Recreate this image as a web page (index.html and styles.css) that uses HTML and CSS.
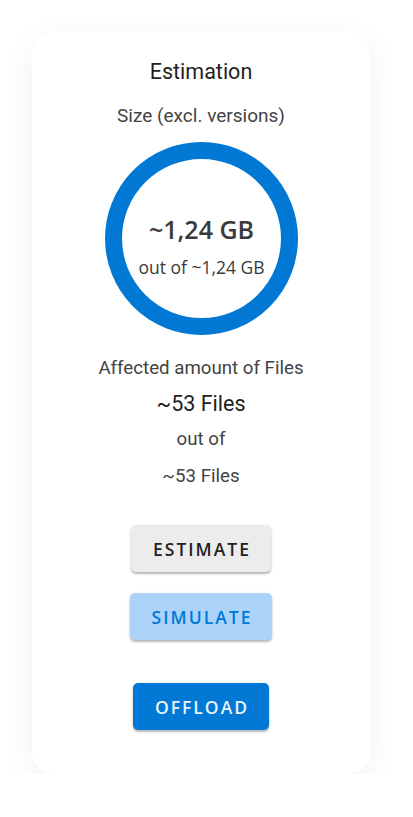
FILE: index.html
```html
<!DOCTYPE html>
<html>
<head>
<meta charset="utf-8">
<link rel="stylesheet" href="styles.css">
</head>
<body>
<div class="page">
  <div class="card">
    <h2 class="title">Estimation</h2>
    <div class="label size-label">Size (excl. versions)</div>
    <div class="ring">
      <svg class="ring-svg" width="193" height="193" viewBox="0 0 193 193">
        <circle cx="96.5" cy="96.5" r="88" fill="none" stroke="#0078d4" stroke-width="17"/>
      </svg>
      <div class="ring-text">
        <div class="ring-value">~1,24 GB</div>
        <div class="ring-sub">out of ~1,24 GB</div>
      </div>
    </div>
    <div class="label files-label">Affected amount of Files</div>
    <div class="files-value">~53 Files</div>
    <div class="label files-out">out of</div>
    <div class="label files-total">~53 Files</div>
    <div class="buttons">
      <button class="btn btn-estimate">ESTIMATE</button>
      <button class="btn btn-simulate">SIMULATE</button>
      <button class="btn btn-offload">OFFLOAD</button>
    </div>
  </div>
</div>
</body>
</html>
```

FILE: styles.css
```css
html, body {
  margin: 0;
  padding: 0;
  background: #ffffff;
}
body {
  font-family: Roboto, "Liberation Sans", sans-serif;
  color: #444;
}
.page {
  padding: 32px 43px 0 32px;
}
.card {
  width: 338px;
  height: 742px;
  box-sizing: border-box;
  background: #fff;
  border-radius: 22px;
  box-shadow: 0 8px 32px rgba(0, 0, 0, 0.06);
  display: flex;
  flex-direction: column;
  align-items: center;
  padding-top: 26px;
}
.title {
  margin: 0;
  font-size: 21.5px;
  font-weight: 400;
  color: #1f1f1f;
  line-height: 28px;
}
.label {
  font-size: 18.7px;
  line-height: 22px;
  color: #444;
}
.size-label {
  font-size: 19px;
  margin-top: 19px;
}
.ring {
  position: relative;
  width: 193px;
  height: 193px;
  margin-top: 15px;
  margin-left: 1px;
}
.ring-svg {
  display: block;
}
.ring-text {
  position: absolute;
  inset: 0;
  display: flex;
  flex-direction: column;
  align-items: center;
  justify-content: center;
  padding-top: 14px;
  box-sizing: border-box;
  font-family: "Open Sans", sans-serif;
  color: #3a3a3a;
}
.ring-value {
  font-size: 25px;
  font-weight: 600;
  line-height: 32px;
}
.ring-sub {
  font-size: 17.5px;
  line-height: 24px;
  margin-top: 10px;
}
.files-label {
  margin-top: 22px;
}
.files-value {
  font-size: 21.5px;
  line-height: 28px;
  color: #1f1f1f;
  margin-top: 11px;
}
.files-out {
  margin-top: 10px;
}
.files-total {
  margin-top: 15px;
}
.buttons {
  display: flex;
  flex-direction: column;
  align-items: center;
  margin-top: 38px;
}
.btn {
  font-family: "Open Sans", sans-serif;
  font-size: 17.5px;
  font-weight: 600;
  letter-spacing: 2px;
  border: none;
  border-radius: 5px;
  height: 47px;
  padding: 0 20px 0 22px;
  box-shadow: 0 2px 2px rgba(0, 0, 0, 0.24), 0 1px 4px rgba(0, 0, 0, 0.08);
  cursor: pointer;
}
.btn-estimate {
  background: #ececec;
  color: #222;
}
.btn-simulate {
  background: #abd3f9;
  color: #0078d4;
  margin-top: 21px;
}
.btn-offload {
  background: #0078d4;
  color: #e8f2fb;
  margin-top: 43px;
}
```
